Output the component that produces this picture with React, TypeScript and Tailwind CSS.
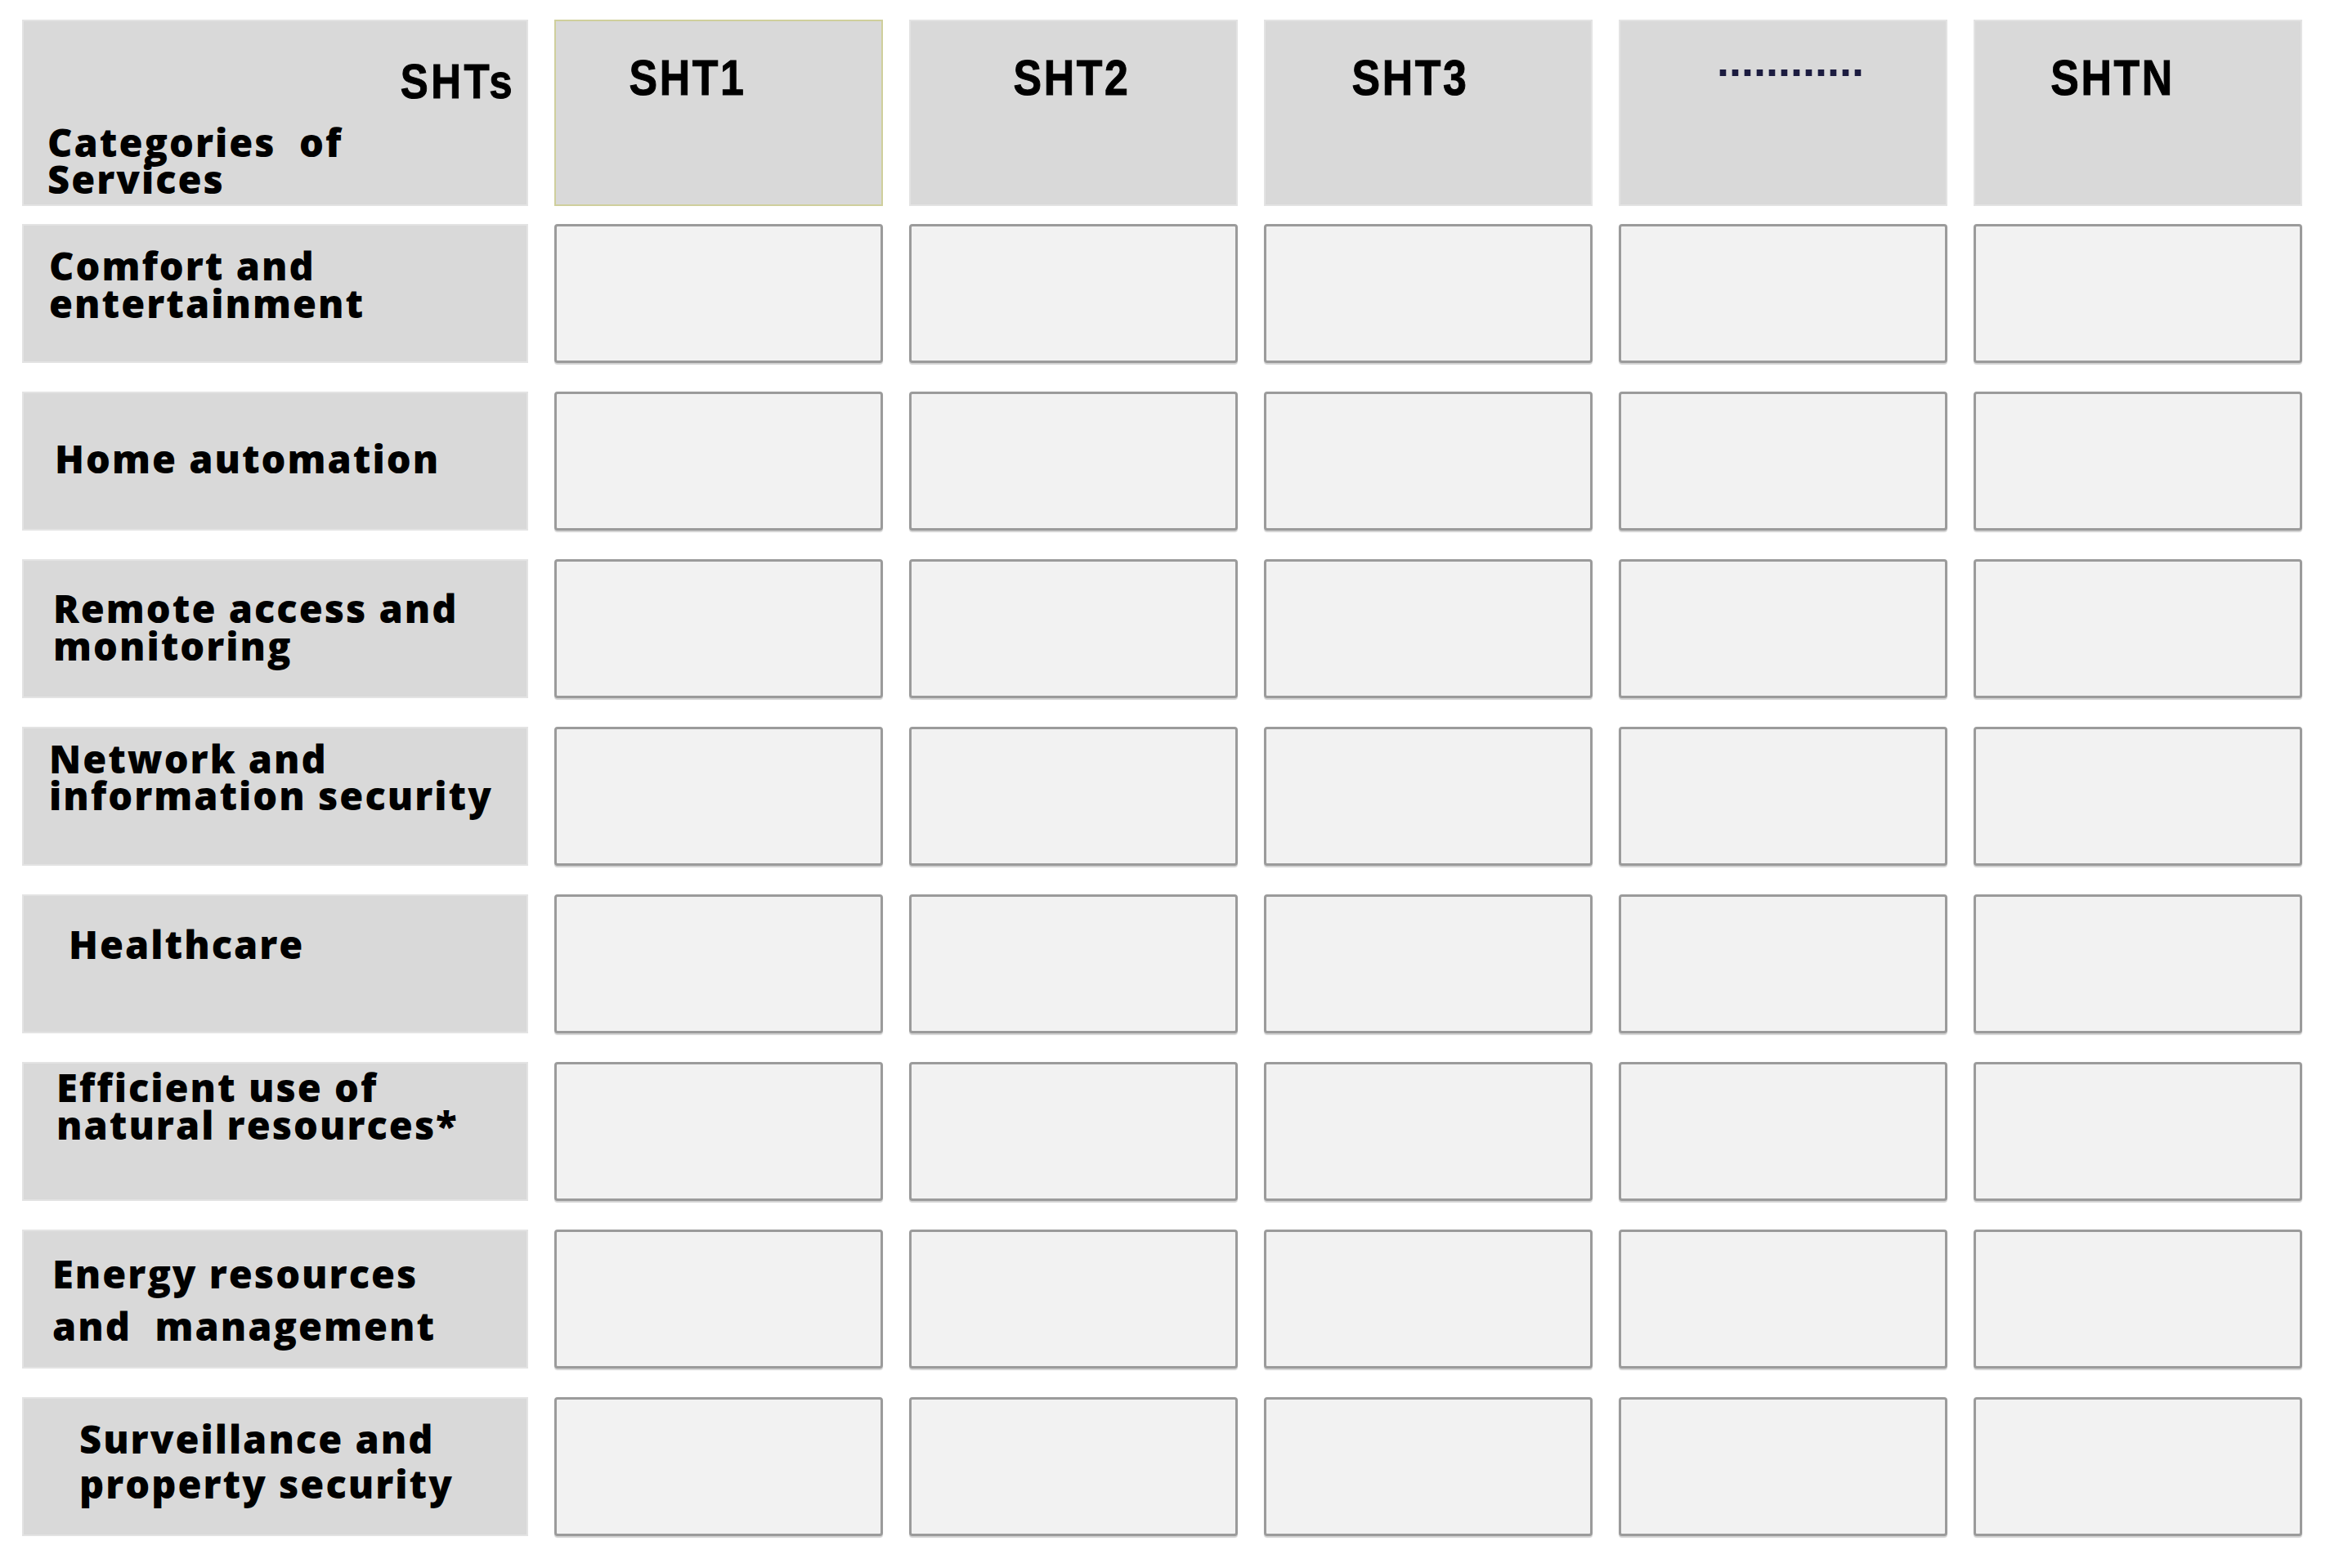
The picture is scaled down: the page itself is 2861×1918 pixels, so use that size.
import React from 'react'

type Row = {
  lines: string[]
  pl: number
  pt: number
  lh: number
}

const rows: Row[] = [
  { lines: ['Comfort and', 'entertainment'], pl: 33, pt: 28, lh: 46 },
  { lines: ['Home automation'], pl: 40, pt: 59, lh: 46 },
  { lines: ['Remote access and', 'monitoring'], pl: 38, pt: 37, lh: 46 },
  { lines: ['Network and', 'information security'], pl: 33, pt: 17, lh: 45 },
  { lines: ['Healthcare'], pl: 57, pt: 38, lh: 46 },
  { lines: ['Efficient use of', 'natural resources*'], pl: 42, pt: 8, lh: 46 },
  { lines: ['Energy resources', 'and  management'], pl: 37, pt: 22, lh: 64 },
  { lines: ['Surveillance and', 'property security'], pl: 70, pt: 24, lh: 55 },
]

// header label + small nudge so each sits where the original has it
const headers = [
  { text: 'SHT1', shift: 'mr-[76px]' },
  { text: 'SHT2', shift: 'mr-[4px]' },
  { text: 'SHT3', shift: 'mr-[44px]' },
  { text: '', shift: 'ml-[18px]' },
  { text: 'SHTN', shift: 'mr-[62px]' },
]

const labelFont = { fontFamily: '"Open Sans", "Liberation Sans", sans-serif' }
const headFont = { fontFamily: '"Liberation Sans", Arial, sans-serif' }

const Cell = () => (
  <div className="h-[170px] rounded-[4px] border-[3px] border-[#9b9b9b] bg-[#f2f2f2] shadow-[0_2px_1px_#d2d2d2]" />
)

const App = () => {
  return (
    <div className="h-[1918px] w-[2861px] bg-white pl-[27px] pt-[24px]">
      {/* header */}
      <div className="grid grid-cols-[619px_repeat(5,402px)] gap-x-[32px]">
        <div className="relative h-[228px] border-2 border-[#e3e3e3] bg-[#d9d9d9]" style={labelFont}>
          <div
            className="absolute right-[14px] top-[44px] inline-block origin-right scale-x-[0.85] text-[60px] font-bold leading-[60px] tracking-[4px] text-black [-webkit-text-stroke:1px_black]"
            style={headFont}
          >
            SHTs
          </div>
          <div className="absolute left-[29px] top-[126px] text-[47px] font-extrabold leading-[45px] tracking-[2px] text-black">
            <div>Categories&nbsp; of</div>
            <div>Services</div>
          </div>
        </div>
        {headers.map((h, i) => (
          <div
            key={i}
            className={
              i === 0
                ? 'flex h-[228px] justify-center border-2 border-[#cfcf9c] bg-[#d9d9d9] pt-[39px]'
                : 'flex h-[228px] justify-center border-2 border-[#e3e3e3] bg-[#d9d9d9] pt-[39px]'
            }
          >
            {h.text ? (
              <span
                className={`inline-block h-[61px] scale-x-[0.85] text-[61px] font-bold leading-[61px] tracking-[3px] text-black [-webkit-text-stroke:1px_black] ${h.shift}`}
                style={headFont}
              >
                {h.text}
              </span>
            ) : (
              <span
                className={`-mt-[18px] inline-block h-[54px] text-[54px] font-bold leading-[54px] text-[#1c1c40] ${h.shift}`}
                style={headFont}
              >
                ............
              </span>
            )}
          </div>
        ))}
      </div>

      {/* rows */}
      <div className="mt-[22px] flex flex-col gap-y-[35px]">
        {rows.map((r) => (
          <div key={r.lines[0]} className="grid grid-cols-[619px_repeat(5,402px)] gap-x-[32px]">
            <div
              className="h-[170px] border-2 border-[#e3e3e3] bg-[#d9d9d9] text-[47px] font-extrabold tracking-[2px] text-black"
              style={{ ...labelFont, paddingLeft: r.pl - 2, paddingTop: r.pt - 2, lineHeight: `${r.lh}px` }}
            >
              {r.lines.map((l) => (
                <div key={l} className="whitespace-pre">
                  {l}
                </div>
              ))}
            </div>
            <Cell />
            <Cell />
            <Cell />
            <Cell />
            <Cell />
          </div>
        ))}
      </div>
    </div>
  )
}

export default App
